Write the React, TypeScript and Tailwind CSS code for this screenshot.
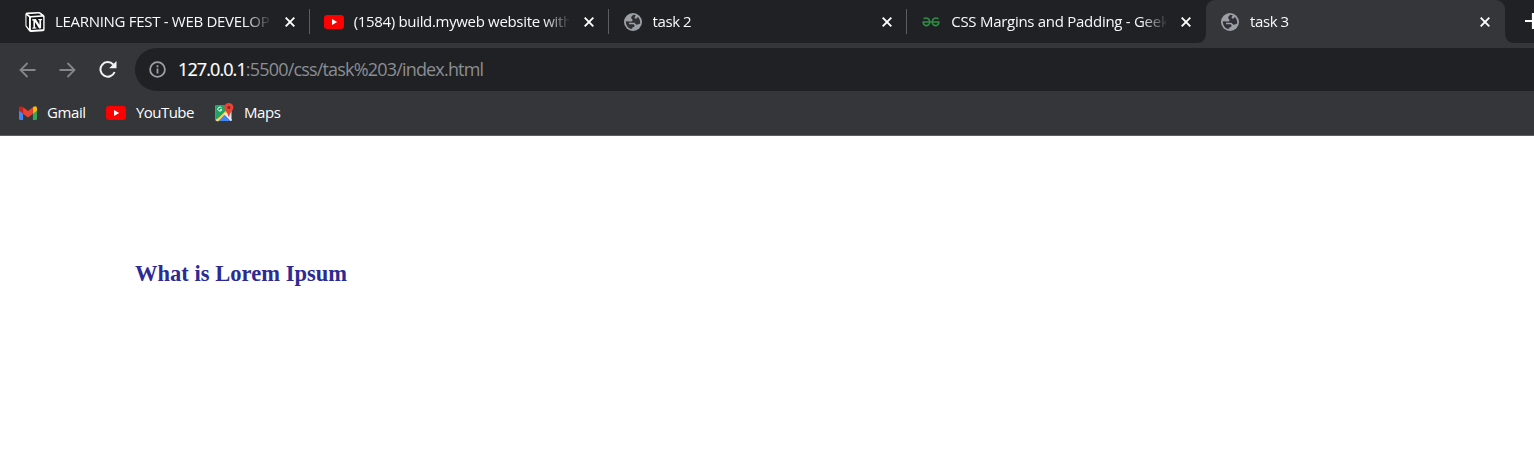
import React from "react";

const YouTubeIcon = () => (
  <svg width="20" height="14" viewBox="0 0 20 14" className="shrink-0">
    <rect width="20" height="14" rx="3.2" fill="#ff0000" />
    <path d="M8 4v6l5.2-3z" fill="#fff" />
  </svg>
);

const NotionIcon = () => (
  <svg width="20" height="20" viewBox="0 0 20 20" className="shrink-0">
    <path d="M.4 2.200Q.4.700 2 .6L14 .1q1 0 1.800.6l3 2.200q.8.600.8 1.600v13q0 1.600-1.600 1.700L6.200 19.900q-1.400.1-2.200-1L1.200 15.300Q.4 14.400.4 13.300z" fill="#fff" />
    <path d="M2.700 2.200 14 1.500l2.300 1.700L5.400 3.900zM1.500 3.200l2.500 2v11.500L1.500 13.500z" fill="#141517" />
    <path d="M5.900 6.200q0-.7.700-.8l10.900-.6q.7 0 .7.700v11q0 .7-.7.8l-10.900.6q-.7 0-.7-.7z" fill="#141517" />
    <path d="M7.100 7.200l3.600-.2 3.700 5.700V8.300l-1.100-.2v-1l3.800-.2v1l-1 .3v8.100l-2 .1-4.100-6.300v5.200l1.400.3v.9l-4.100.2v-.9l1.100-.4V8.600l-1.300-.2z" fill="#fff" />
  </svg>
);

const GlobeIcon = () => (
  <svg width="18" height="18" viewBox="0 0 18 18" className="ml-px shrink-0">
    <circle cx="9" cy="9" r="9" fill="#9aa0a6" />
    <path d="M9.500 1.800C8 3 7.200 3.600 7.200 4.800c0 1.300 1.300 1.200 1.300 2.400C8.500 8.400 7.400 8.600 6 8.500L1.900 8.300C1.600 12.500 4.600 16 8.200 16.100v-1.600c1.500 0 2.300-.7 2.300-1.700 0-1.100-.8-1.500-2.200-1.500H5.100L5 9.800h4.100c1.500 0 1.900.500 2.500 1.300.6.800 2.200 1 4.500-.5C16.700 7 14.800 5.500 14.300 4.200l-1 .1c-.3 1.300-1 1.500-1.900 1.300-.9-.2-1-.9-.6-1.600l.9-1.700z" fill="#303136" />
  </svg>
);

const GeeksIcon = () => (
  <svg width="18" height="10" viewBox="0 0 18 10" className="ml-px shrink-0" fill="none" stroke="#2f8d46" strokeWidth="1.600">
    <path d="M1.500 1.700C4.800.2 7.700 1.500 7.700 4.900 7.700 8 5.300 9 3.400 8.400 1.900 7.900 1.200 6.600 1.200 5H16.800c0 1.600-.7 2.900-2.200 3.400-1.900.6-4.300-.4-4.300-3.500 0-3.400 2.900-4.700 6.200-3.200" />
  </svg>
);

const GmailIcon = () => (
  <svg width="18" height="14" viewBox="0 0 19 14" preserveAspectRatio="none" className="shrink-0">
    <path d="M0 3h4.300v11H1.300Q0 14 0 12.700z" fill="#4285f4" />
    <path d="M14.700 3H19v9.700q0 1.300-1.300 1.300h-3z" fill="#34a853" />
    <path d="M14.700 1.300C16.500-.5 19 0 19 2.200V4.500l-4.300 3.200z" fill="#fbbc04" />
    <path d="M4.300 1.300 9.500 5.100l5.200-3.800v6.400L9.500 11.500 4.300 7.700z" fill="#ea4335" />
    <path d="M0 2.200C0 0 2.500-.5 4.300 1.300v6.400L0 4.500z" fill="#c5221f" />
  </svg>
);

const MapsIcon = () => (
  <svg width="19" height="19" viewBox="0 0 19 19" className="shrink-0">
    <rect x=".5" y="2" width="16" height="16" rx="1.200" fill="#dfe3e6" />
    <path d="M1.300 2h10.400l2 6L.5 17V3q0-1 .8-1z" fill="#1fa463" />
    <path d="m3 18 6.500-7L16 18z" fill="#4285f4" />
    <path d="m2 18 10-10" stroke="#ffd04c" strokeWidth="2" />
    <path d="m9.500 10.500 7 7" stroke="#eef0f2" strokeWidth="1.600" />
    <path d="M6.600 5A2 2 0 1 0 6.800 6.700H5" fill="none" stroke="#fff" strokeWidth="1" />
    <path d="M13.800 0a4.600 4.600 0 0 1 4.600 4.600c0 3-3.600 4.600-4.100 8.900h-1c-.5-4.300-4.100-5.900-4.100-8.900A4.600 4.600 0 0 1 13.800 0z" fill="#ea4335" />
    <circle cx="13.800" cy="4.400" r="1.500" fill="#8c2218" />
  </svg>
);

const CloseIcon = () => (
  <svg width="10" height="10" viewBox="0 0 10 10" className="shrink-0" stroke="#fff" strokeWidth="1.900">
    <path d="m.7.7 8.600 8.600M9.300.7.7 9.300" />
  </svg>
);

type TabProps = { icon: React.ReactNode; title: string; tracking: string; active?: boolean; divider?: boolean };

const Tab = ({ icon, title, tracking, active, divider }: TabProps) => (
  <div className={`relative flex h-[43px] w-[298.750px] shrink-0 items-center pl-[14px] pr-[15px] ${active ? "rounded-t-[9px] bg-[#35363a]" : ""}`}>
    <div className="flex w-[20px] shrink-0 items-center">{icon}</div>
    <div className={`ml-[10px] mt-[-2px] w-[215px] shrink-0 overflow-hidden whitespace-nowrap text-[15px] leading-5 text-[#f8f9fa] ${tracking} [mask-image:linear-gradient(to_right,#000_190px,transparent_217px)]`}>
      {title}
    </div>
    <div className="ml-auto flex"><CloseIcon /></div>
    {divider && <div className="absolute right-0 top-[9px] h-[25px] w-px bg-[#5b5d61]" />}
    {active && (
      <>
        <svg className="absolute -left-[10px] bottom-0" width="10" height="10" viewBox="0 0 10 10"><path d="M10 0v10H0Q10 10 10 0z" fill="#35363a" /></svg>
        <svg className="absolute -right-[10px] bottom-0" width="10" height="10" viewBox="0 0 10 10"><path d="M0 0v10h10Q0 10 0 0z" fill="#35363a" /></svg>
      </>
    )}
  </div>
);

export default function App() {
  return (
    <div className="h-[472px] w-[1534px] overflow-hidden bg-white font-['Open_Sans',sans-serif]">
      <div className="flex h-[43px] overflow-hidden bg-[#202124] pl-[11px]">
        <Tab icon={<NotionIcon />} title="LEARNING FEST - WEB DEVELOPMENT" tracking="tracking-[-0.300px]" divider />
        <Tab icon={<YouTubeIcon />} title="(1584) build.myweb website with html" tracking="tracking-[-0.330px]" divider />
        <Tab icon={<GlobeIcon />} title="task 2" tracking="tracking-[-0.400px]" divider />
        <Tab icon={<GeeksIcon />} title="CSS Margins and Padding - GeeksforGeeks" tracking="tracking-[-0.280px]" />
        <Tab icon={<GlobeIcon />} title="task 3" tracking="tracking-[-0.400px]" active />
        <svg width="16" height="16" viewBox="0 0 16 16" className="ml-[20px] mt-[13px] shrink-0" stroke="#fff" strokeWidth="2.200"><path d="M0 8h16M8 0v16" /></svg>
      </div>
      <div className="flex h-[53px] items-start bg-[#35363a] pt-[5px]">
        <div className="flex h-[43px] w-[135px] shrink-0 items-center pl-[19px]">
          <svg width="17" height="16" viewBox="0 0 17 16" fill="none" stroke="#84868a" strokeWidth="1.800"><path d="M16.500 8H1.500M8.500 1 1.500 8l7 7" /></svg>
          <svg className="ml-[23px]" width="17" height="16" viewBox="0 0 17 16" fill="none" stroke="#84868a" strokeWidth="1.800"><path d="M.5 8h15M8.500 1l7 7-7 7" /></svg>
          <svg className="ml-[23px]" width="18" height="17" viewBox="0 0 18 17" fill="none" stroke="#f1f3f4" strokeWidth="2"><path d="M15.600 11A7.300 7.300 0 1 1 14.200 3.500" /><path d="M17.500 0v7.300h-7.300z" fill="#f1f3f4" stroke="none" /></svg>
        </div>
        <div className="flex h-[43px] flex-1 items-center rounded-l-[21.500px] bg-[#202124] pl-[14px]">
          <svg width="17" height="17" viewBox="0 0 17 17" fill="none" stroke="#9aa0a6"><circle cx="8.500" cy="8.500" r="7.400" strokeWidth="1.800" /><path d="M8.500 7.500v5M8.500 4.300v1.900" strokeWidth="1.800" /></svg>
          <div className="ml-[12px] mt-[-2px] whitespace-nowrap text-[18px] leading-6 tracking-[-0.820px] text-[#8b8e92]"><span className="tracking-[-0.900px] text-white [-webkit-text-stroke:0.200px_#fff]">127.0.0.1</span>:5500/css/task%203/index.html</div>
        </div>
      </div>
      <div className="flex h-10 items-center border-b border-[#5c5d60] bg-[#35363a] pb-[6px] pl-[19px] text-[15px] leading-5 text-white">
        <GmailIcon />
        <span className="ml-[10px] mt-[-2px] w-[59px] tracking-[-0.400px]">Gmail</span>
        <YouTubeIcon />
        <span className="ml-[10px] mt-[-2px] w-[79px] tracking-[-0.550px]">YouTube</span>
        <MapsIcon />
        <span className="ml-[10px] mt-[-2px] tracking-[-0.400px]">Maps</span>
      </div>
      <main className="pl-[135px] pt-[124px]">
        <h1 className="font-['Liberation_Serif',serif] text-[22.500px] font-bold leading-[27px] tracking-[0.030px] text-[#2d2a93]">What is Lorem Ipsum</h1>
      </main>
    </div>
  );
}
